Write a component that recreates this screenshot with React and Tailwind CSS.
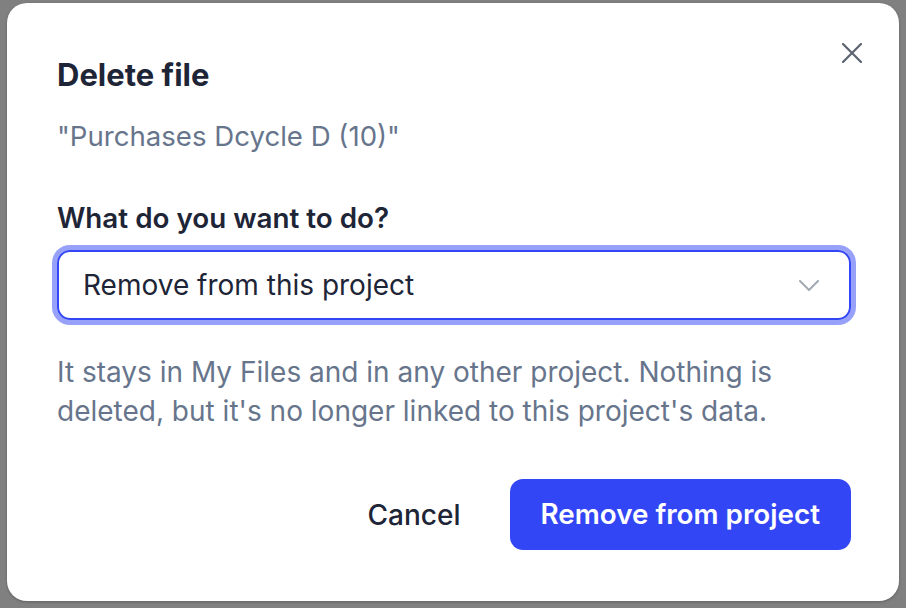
import React from "react";

export default function App() {
  return (
    <div
      className="w-[906px] h-[608px] bg-[#808080] pt-[3px] pl-[7px] overflow-hidden"
      style={{ fontFamily: "Inter, 'Noto Sans', sans-serif" }}
    >
      <div className="relative w-[892px] h-[598px] bg-white rounded-[20px] shadow-[0_1px_3px_rgba(0,0,0,0.25)] pt-[53px] pl-[50px] pr-[48px] flex flex-col">
        <button className="absolute left-[835px] top-[40px] w-[20px] h-[20px] flex items-center justify-center text-[#5b6270]">
          <svg width="20" height="20" viewBox="0 0 20 20" fill="none" stroke="currentColor" strokeWidth="2.2" strokeLinecap="round">
            <path d="M1 1 L19 19 M19 1 L1 19" />
          </svg>
        </button>
        <h2 className="text-[31px] leading-[38px] font-bold text-[#1e2537]">Delete file</h2>
        <p className="mt-[25px] text-[27.6px] leading-[34px] text-[#67758c]">"Purchases Dcycle D (10)"</p>
        <label className="mt-[48px] text-[27.8px] leading-[34px] font-semibold text-[#1e2537]">What do you want to do?</label>
        <div className="mt-[15px] h-[70px] rounded-[13px] border-2 border-[#3346f5] ring-[5px] ring-[#97a1f9] flex items-center justify-between pl-[24px] pr-[30px]">
          <span className="text-[28px] text-[#1e2537]">Remove from this project</span>
          <svg width="20" height="11" viewBox="0 0 20 11" fill="none" stroke="#a3a9b3" strokeWidth="2" strokeLinecap="round" strokeLinejoin="round">
            <path d="M1 1 L10 10 L19 1" />
          </svg>
        </div>
        <p className="mt-[33px] text-[28px] leading-[39px] text-[#67758c]">
          It stays in My Files and in any other project. Nothing is deleted, but it's no longer linked to this project's data.
        </p>
        <div className="mt-[48px] flex items-center justify-end">
          <button className="text-[28px] leading-[34px] font-medium text-[#1e2537] mr-[49px]">Cancel</button>
          <button className="h-[71px] px-[31px] rounded-[13px] bg-[#3346f5] text-white text-[27.8px] font-semibold">Remove from project</button>
        </div>
      </div>
    </div>
  );
}
